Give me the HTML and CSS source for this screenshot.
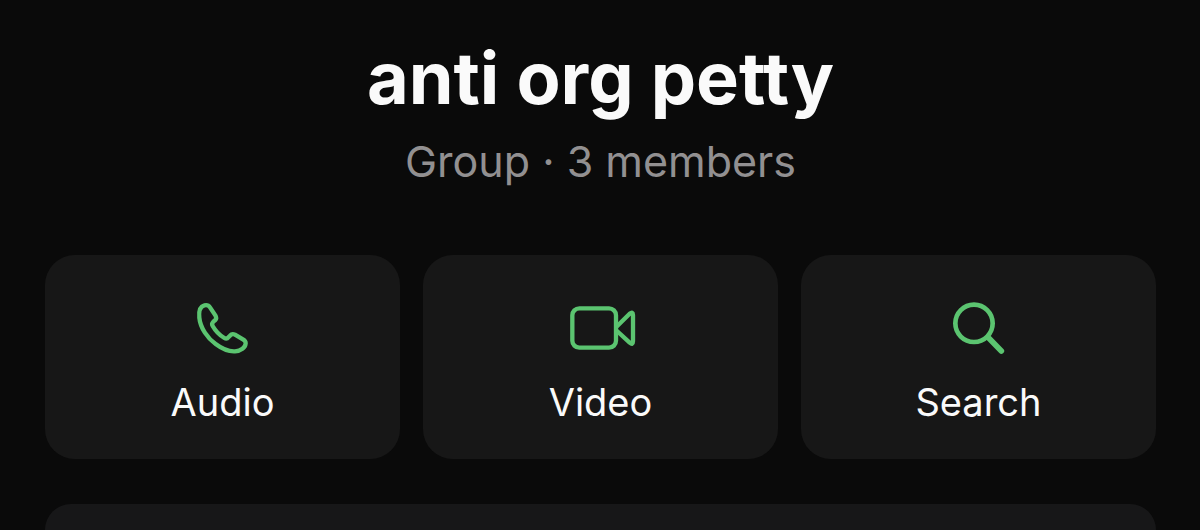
FILE: index.html
```html
<!DOCTYPE html>
<html lang="en">
<head>
    <meta charset="UTF-8">
    <meta name="viewport" content="width=device-width, initial-scale=1.0">
    <title>anti org petty</title>
    <link rel="stylesheet" href="styles.css">
</head>
<body>
    <main class="group-info">
        <header class="group-header">
            <h1>anti org petty</h1>
            <p>Group · 3 members</p>
        </header>

        <!-- Quick actions -->
        <div class="actions">
            <button type="button" class="action">
                <svg class="icon" viewBox="10 25 240 180" aria-hidden="true">
                    <path d="M74 47C62 50 57 64 59 84C62 115 84 146 108 163C128 178 150 186 166 185C184 184 197 174 198 161C198 156 196 153 191 150L166 135C160 132 155 133 151 138L147 142C144 146 139 148 134 145C122 138 107 123 99 109C96 104 97 100 101 96L107 91C111 87 110 82 107 77L91 53C87 47 81 45 74 47Z"/>
                </svg>
                <span>Audio</span>
            </button>
            <button type="button" class="action">
                <svg class="icon" viewBox="18 23 240 180" aria-hidden="true">
                    <rect x="52" y="54" width="131" height="118" rx="21"/>
                    <path d="M186 108L224 70Q234 62 234 74V153Q234 165 224 157L186 122"/>
                </svg>
                <span>Video</span>
            </button>
            <button type="button" class="action">
                <svg class="icon icon-search" viewBox="12 24 240 180" aria-hidden="true">
                    <circle cx="117" cy="100" r="56"/>
                    <path class="handle" d="M159 142L199 183"/>
                </svg>
                <span>Search</span>
            </button>
        </div>

        <!-- Details panel, continues below the fold -->
        <section class="panel"></section>
    </main>
</body>
</html>
```

FILE: styles.css
```css
* {
    box-sizing: border-box;
}
body {
    margin: 0;
    background-color: #0a0a0a;
    color: #fafafa;
    font-family: Inter, "Liberation Sans", sans-serif;
}
.group-info {
    display: flex;
    flex-direction: column;
    min-height: 100vh;
    padding: 34px 44px 0 45px;
}
.group-header {
    text-align: center;
    margin-bottom: 67px;
}
h1 {
    margin: 0 0 12px;
    font-size: 72px;
    line-height: 88px;
    font-weight: 700;
}
.group-header p {
    margin: 0;
    font-size: 43px;
    line-height: 54px;
    color: #929091;
}
.actions {
    display: grid;
    grid-template-columns: repeat(3, 1fr);
    gap: 23px;
    margin-bottom: 45px;
}
.action {
    display: flex;
    flex-direction: column;
    align-items: center;
    gap: 20px;
    padding: 43px 16px 33px;
    border: none;
    border-radius: 30px;
    background-color: #171717;
    color: #fafafa;
    font-family: inherit;
    font-size: 38px;
    line-height: 48px;
    cursor: pointer;
}
.icon {
    width: 80px;
    height: 60px;
    fill: none;
    stroke: #5bc470;
    stroke-width: 13;
    stroke-linecap: round;
    stroke-linejoin: round;
}
.icon-search {
    stroke-width: 14;
}
.handle {
    stroke-width: 17;
}
.panel {
    flex: 1;
    border-radius: 30px 30px 0 0;
    background-color: #171718;
}
```
